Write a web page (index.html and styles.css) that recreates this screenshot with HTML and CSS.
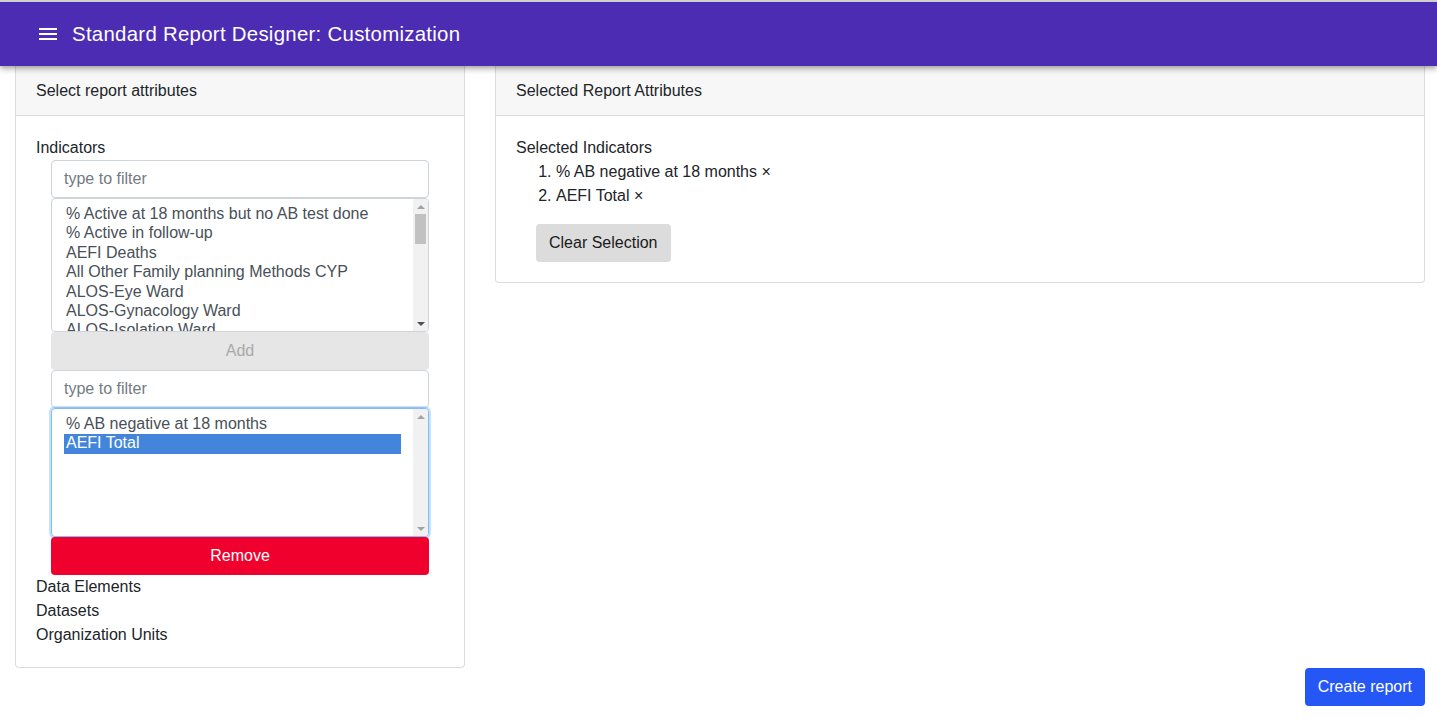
FILE: index.html
```html
<!DOCTYPE html>
<html lang="en">
<head>
<meta charset="utf-8">
<title>Standard Report Designer: Customization</title>
<link rel="stylesheet" href="styles.css">
</head>
<body>
<header class="appbar">
  <svg class="menu-icon" viewBox="0 0 24 24" width="24" height="24" aria-hidden="true"><path d="M3 18h18v-2H3v2zm0-5h18v-2H3v2zm0-7v2h18V6H3z" fill="#fff"/></svg>
  <h1 class="title">Standard Report Designer: Customization</h1>
</header>

<main class="layout">
  <section class="card">
    <div class="card-header">Select report attributes</div>
    <div class="card-body">
      <div class="group-label">Indicators</div>
      <div class="picker">
        <input class="filter" type="text" placeholder="type to filter">
        <div class="listbox listbox-tall">
          <ul class="options">
            <li>% Active at 18 months but no AB test done</li>
            <li>% Active in follow-up</li>
            <li>AEFI Deaths</li>
            <li>All Other Family planning Methods CYP</li>
            <li>ALOS-Eye Ward</li>
            <li>ALOS-Gynacology Ward</li>
            <li>ALOS-Isolation Ward</li>
            <li>ALOS-Maternity Ward</li>
            <li>ALOS-Medical Ward</li>
          </ul>
          <div class="scrollbar">
            <div class="sb-btn"><span class="arrow-up"></span></div>
            <div class="sb-track"><div class="sb-thumb"></div></div>
            <div class="sb-btn"><span class="arrow-down dark"></span></div>
          </div>
        </div>
        <button class="btn btn-add" type="button" disabled>Add</button>
        <input class="filter" type="text" placeholder="type to filter">
        <div class="listbox listbox-focused">
          <ul class="options">
            <li>% AB negative at 18 months</li>
            <li class="selected">AEFI Total</li>
          </ul>
          <div class="scrollbar">
            <div class="sb-btn"><span class="arrow-up"></span></div>
            <div class="sb-track"></div>
            <div class="sb-btn"><span class="arrow-down"></span></div>
          </div>
        </div>
        <button class="btn btn-remove" type="button">Remove</button>
      </div>
      <div class="group-label">Data Elements</div>
      <div class="group-label">Datasets</div>
      <div class="group-label">Organization Units</div>
    </div>
  </section>

  <section class="card">
    <div class="card-header">Selected Report Attributes</div>
    <div class="card-body">
      <div class="group-label">Selected Indicators</div>
      <ol class="selected-list">
        <li>% AB negative at 18 months ×</li>
        <li>AEFI Total ×</li>
      </ol>
      <div class="clear-wrap">
        <button class="btn btn-clear" type="button">Clear Selection</button>
      </div>
    </div>
  </section>
</main>

<div class="footer">
  <button class="btn btn-create" type="button">Create report</button>
</div>
</body>
</html>
```

FILE: styles.css
```css
* { box-sizing: border-box; }

html, body {
  margin: 0;
  padding: 0;
  background: #fff;
}

body {
  font-family: "Liberation Sans", Arial, sans-serif;
  font-size: 16px;
  line-height: 24px;
  color: #212529;
}

.appbar {
  position: relative;
  z-index: 2;
  display: flex;
  align-items: center;
  height: 66px;
  border-top: 2px solid #cfcfcf;
  padding-left: 36px;
  background: #4d2cb4;
  color: #fff;
  box-shadow: 0 2px 4px -1px rgba(0,0,0,.2), 0 4px 5px 0 rgba(0,0,0,.14), 0 1px 10px 0 rgba(0,0,0,.12);
}

.menu-icon {
  display: block;
  flex: none;
}

.title {
  margin: 0 0 0 12px;
  font-size: 20.4px;
  font-weight: 400;
  line-height: 24px;
  letter-spacing: 0.28px;
}

.layout {
  display: grid;
  grid-template-columns: 450px 930px;
  column-gap: 30px;
  align-items: start;
  padding-left: 15px;
}

.card {
  border: 1px solid #dcdcdc;
  border-top: 0;
  border-radius: 0 0 4px 4px;
  background: #fff;
}

.card-header {
  padding: 13px 20px 12px;
  background: #f7f7f7;
  border-bottom: 1px solid #dcdcdc;
}

.card-body {
  padding: 20px;
}

.group-label {
  line-height: 24px;
}

.picker {
  display: flex;
  flex-direction: column;
  padding: 0 15px;
}

.filter {
  display: block;
  width: 100%;
  height: 38px;
  padding: 6px 12px;
  border: 1px solid #ced4da;
  border-radius: 4px;
  font-family: inherit;
  font-size: 16px;
  color: #495057;
  background: #fff;
  outline: none;
}

.filter::placeholder {
  color: #737b82;
}

.listbox {
  display: flex;
  height: 129px;
  border: 1px solid #ced4da;
  border-radius: 4px;
  background: #fff;
  overflow: hidden;
}

.listbox-tall {
  height: 134px;
}

.listbox-focused {
  border-color: #80bdff;
  box-shadow: 0 0 0 2px rgba(0,123,255,.22);
}

.options {
  flex: 1;
  min-width: 0;
  margin: 0;
  padding: 6px 12px 0;
  list-style: none;
  overflow: hidden;
  color: #495057;
}

.options li {
  padding: 0 2px 1px;
  line-height: 18.4px;
  white-space: nowrap;
}

.options li.selected {
  background: #4385da;
  color: #fff;
}

.scrollbar {
  display: flex;
  flex-direction: column;
  width: 15px;
  flex: none;
  background: #f1f1f1;
}

.sb-btn {
  height: 15px;
  display: flex;
  align-items: center;
  justify-content: center;
}

.arrow-up,
.arrow-down {
  width: 0;
  height: 0;
  border-left: 4px solid transparent;
  border-right: 4px solid transparent;
}

.arrow-up {
  border-bottom: 4px solid #a3a3a3;
}

.arrow-down {
  border-top: 4px solid #a3a3a3;
}

.arrow-down.dark {
  border-top-color: #505050;
}

.sb-track {
  flex: 1;
  padding: 0 2px;
}

.sb-thumb {
  height: 30px;
  background: #c1c1c1;
}

.btn {
  display: inline-block;
  height: 38px;
  padding: 0 13px;
  border: 0;
  border-radius: 4px;
  font-family: inherit;
  font-size: 16px;
  line-height: 38px;
  text-align: center;
  cursor: pointer;
}

.btn-add {
  width: 100%;
  background: #e6e6e6;
  color: #a9a9a9;
  cursor: default;
}

.btn-remove {
  position: relative;
  width: 100%;
  background: #f0002d;
  color: #fff;
}

.selected-list {
  margin: 0;
  padding-left: 40px;
}

.clear-wrap {
  padding: 16px 0 0 20px;
}

.btn-clear {
  background: #dcdcdc;
  color: #1a1a1a;
}

.footer {
  display: flex;
  justify-content: flex-end;
  padding: 0 12px 0 0;
}

.btn-create {
  background: #2457f6;
  color: #fff;
}
```
